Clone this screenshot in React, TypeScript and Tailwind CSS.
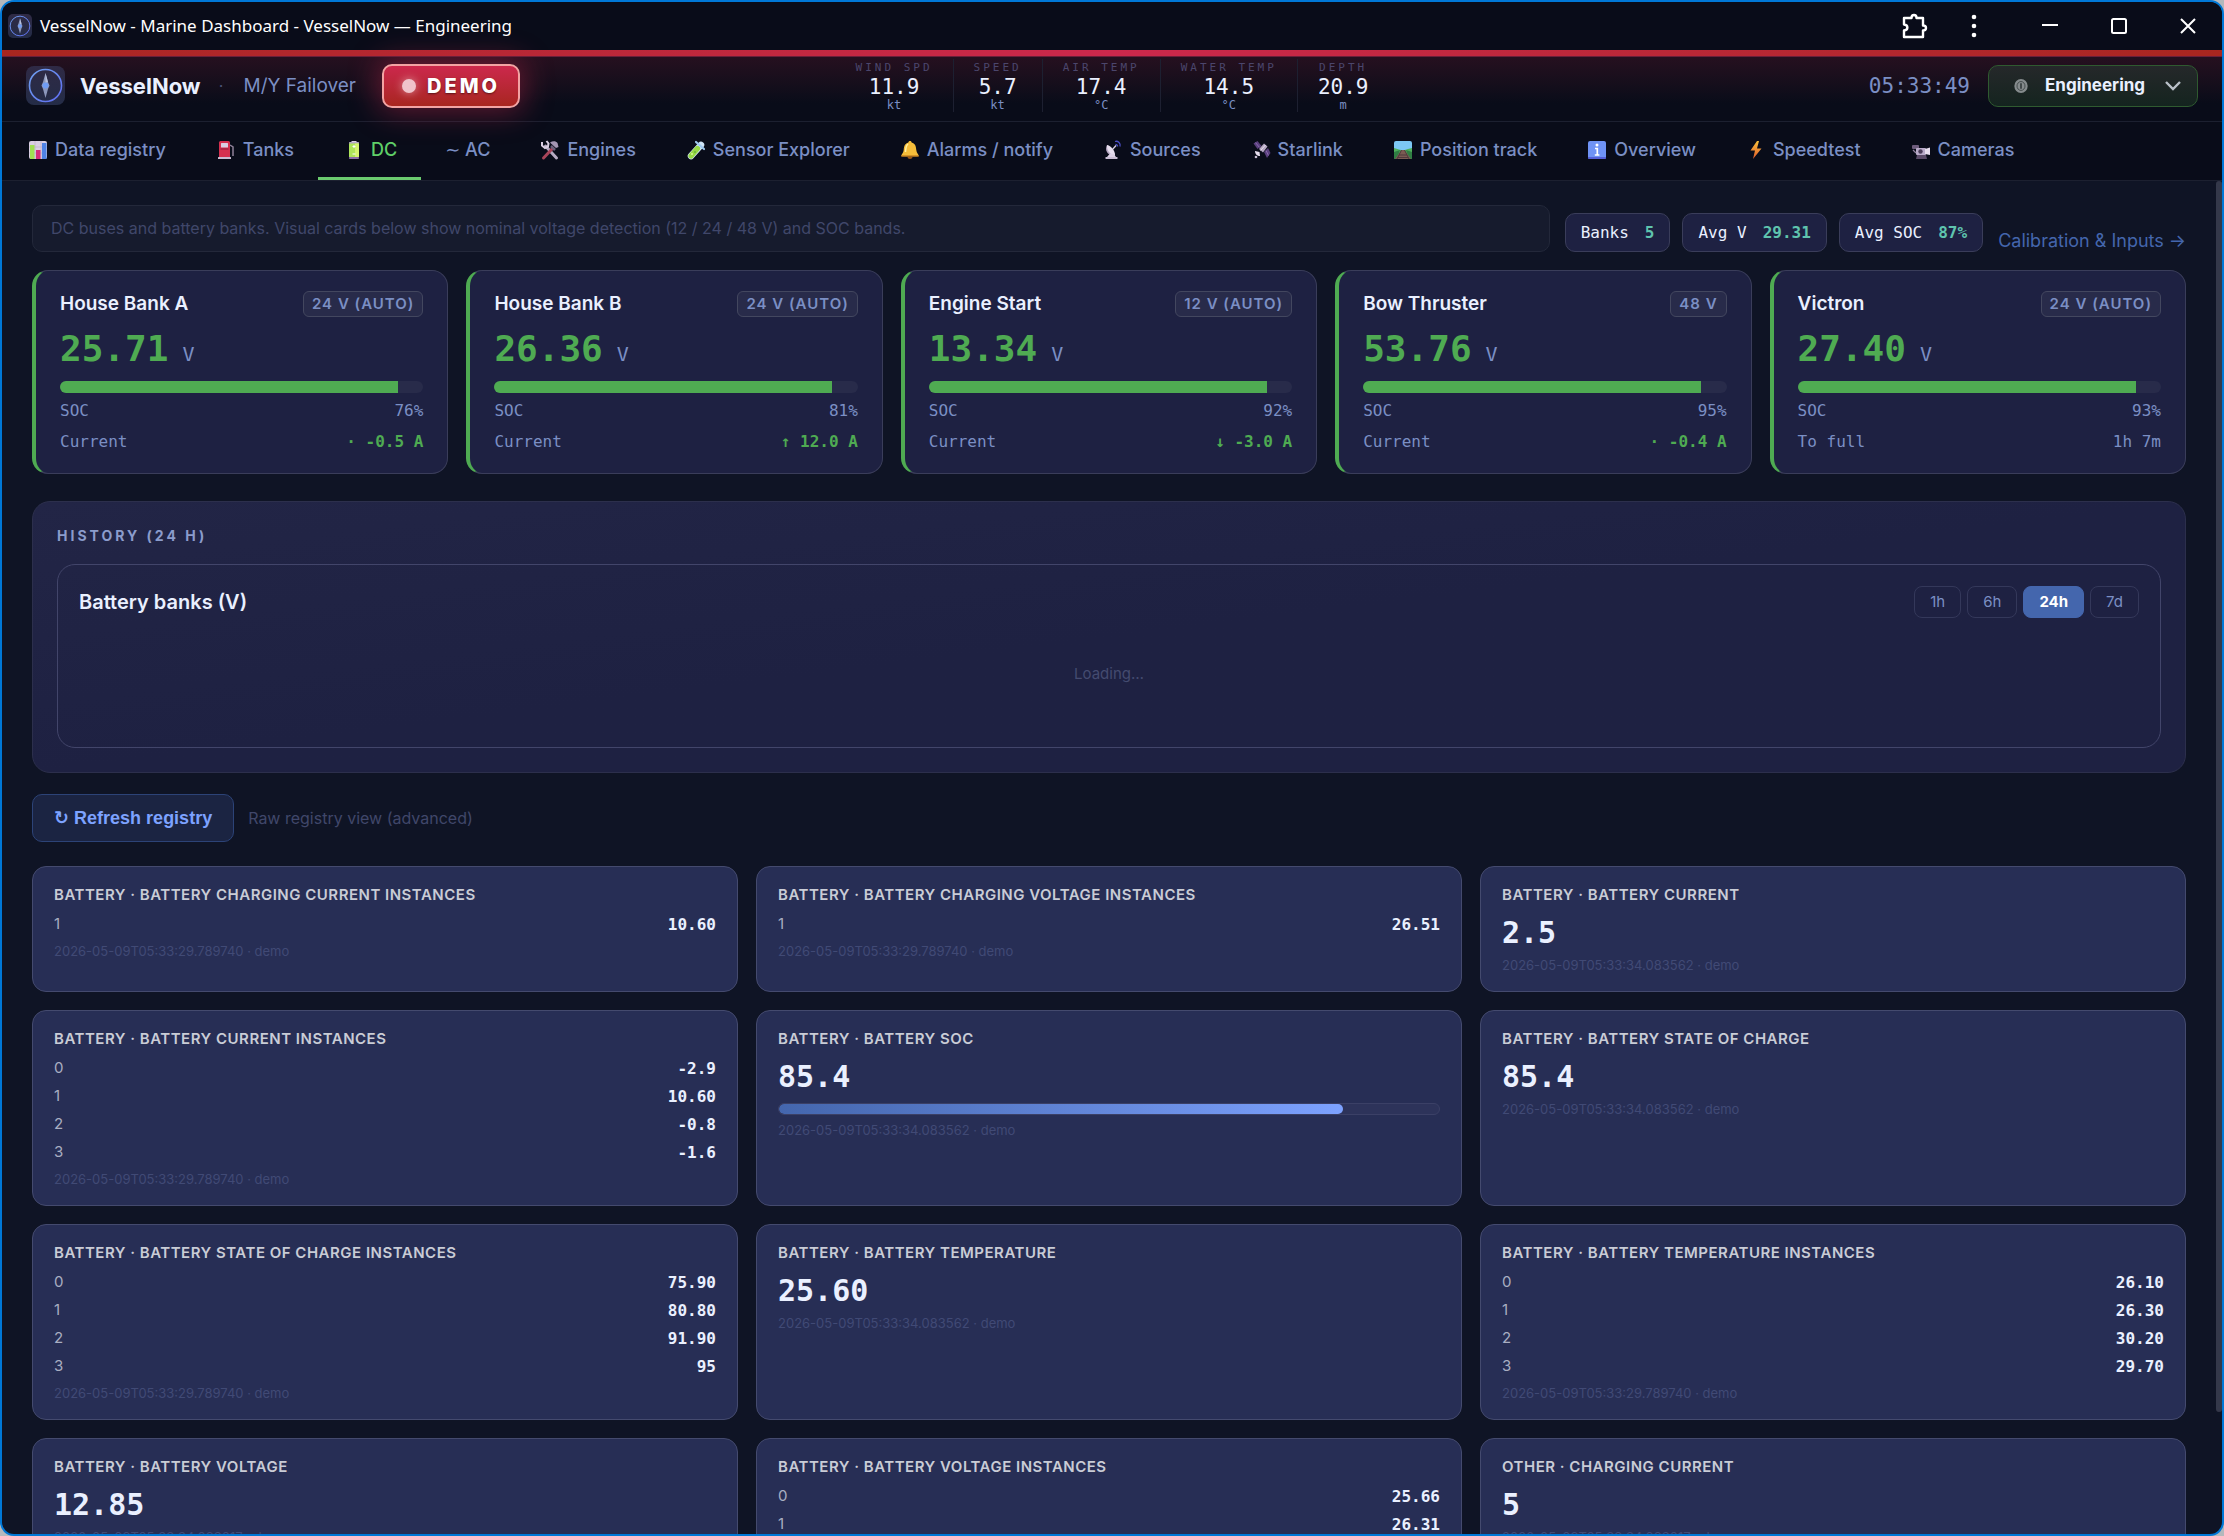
import React from "react";

const SANS = "font-['Inter','DejaVu_Sans',sans-serif]";
const MONO = "font-['DejaVu_Sans_Mono','Liberation_Mono',monospace]";

/* ---------- icons ---------- */

function Compass({ className, id }: { className: string; id: string }) {
  return (
    <svg viewBox="0 0 39 39" className={className} aria-hidden="true">
      <defs>
        <linearGradient id={id + "-bg"} x1="0" y1="0" x2="0" y2="1">
          <stop offset="0" stopColor="#2f2a45" />
          <stop offset="1" stopColor="#242c47" />
        </linearGradient>
        <linearGradient id={id + "-ring"} x1="0" y1="0" x2="1" y2="1">
          <stop offset="0" stopColor="#6fa0ee" />
          <stop offset="1" stopColor="#5f6cf0" />
        </linearGradient>
      </defs>
      <rect width="39" height="39" rx="8" fill={`url(#${id}-bg)`} />
      <circle cx="19.500" cy="19.500" r="16" fill="none" stroke={`url(#${id}-ring)`} strokeWidth="1.600" />
      <path d="M19.500 7 L22 16 L23.500 19.500 L22 23 L19.500 32 L17 23 L15.500 19.500 L17 16 Z" fill="#8c97bb" />
      <path d="M19.500 7 L22 16 L19.500 17 Z" fill="#b9c1dc" />
      <circle cx="19.500" cy="19.500" r="3" fill="#6f9cf5" />
    </svg>
  );
}

function Emoji({ children }: { children: React.ReactNode }) {
  return (
    <svg viewBox="0 0 24 24" className="size-6 shrink-0" aria-hidden="true">
      {children}
    </svg>
  );
}

const icons = {
  chart: (
    <Emoji>
      <rect x="3" y="3" width="18" height="18" rx="2" fill="#d9cfe3" />
      <path d="M3 9h18M3 15h18M9 3v18M15 3v18" stroke="#b9abc9" strokeWidth="0.600" />
      <rect x="4" y="7" width="4.500" height="14" fill="#9fe052" />
      <rect x="10" y="12" width="4.500" height="9" fill="#d52c7b" />
      <rect x="16" y="5" width="4.500" height="16" fill="#4f83e6" />
    </Emoji>
  ),
  fuel: (
    <Emoji>
      <path d="M16 7l3 2v9" fill="none" stroke="#8f8199" strokeWidth="1.500" />
      <rect x="5" y="3" width="11" height="17" rx="1.500" fill="#d5304f" />
      <rect x="7" y="5" width="7" height="4.500" rx="0.500" fill="#d9cfe3" />
      <path d="M6.500 11h8" stroke="#8f1d3d" strokeWidth="1" />
      <rect x="4" y="19" width="13" height="2" rx="0.500" fill="#c9bdd3" />
    </Emoji>
  ),
  battery: (
    <Emoji>
      <rect x="9.500" y="3" width="5" height="2" fill="#d9cfe3" />
      <rect x="7" y="4" width="10" height="2" rx="0.800" fill="#b7a9c4" />
      <rect x="7" y="5.500" width="10" height="13.500" fill="#aee55a" />
      <rect x="13" y="5.500" width="4" height="13.500" fill="#d5f56f" />
      <rect x="7" y="19" width="10" height="2" rx="0.800" fill="#8d6fa8" />
      <path d="M12 7v3M10.500 8.500h3M10.500 16h3" stroke="#fff" strokeWidth="1.100" />
    </Emoji>
  ),
  tools: (
    <Emoji>
      <path d="M7.500 8L18.500 20" stroke="#b6aac2" strokeWidth="3" strokeLinecap="round" />
      <path d="M4 4v3.500L7 10l3-1.500.5-3L8.500 3" fill="none" stroke="#d9cfe3" strokeWidth="2" />
      <path d="M14.500 10.500L5.500 20" stroke="#a8455a" strokeWidth="3" strokeLinecap="round" />
      <path d="M12 4.500c3-2 6-1.500 7.500.5l1 4-2.500 1-5-4.500z" fill="#a596b3" />
      <path d="M13 8l4 4" stroke="#6d607b" strokeWidth="2.500" />
    </Emoji>
  ),
  tube: (
    <Emoji>
      <path d="M17 7L7 18" stroke="#cfe4f6" strokeWidth="6.500" strokeLinecap="round" />
      <path d="M13.500 10.500L7 18" stroke="#96d944" strokeWidth="5.200" strokeLinecap="round" />
      <path d="M12 4l8 7" stroke="#9fc9f0" strokeWidth="2.200" strokeLinecap="round" />
      <circle cx="8" cy="16" r="1" fill="#d8f59a" />
      <circle cx="11" cy="14" r="0.800" fill="#4c9130" />
    </Emoji>
  ),
  bell: (
    <Emoji>
      <path d="M12 3c1 0 1.600.7 1.600 1.600C17 5.500 18 8 18.300 12c.2 3 2.400 4 2.400 6H3.300c0-2 2.200-3 2.400-6C6 8 7 5.500 10.400 4.600 10.400 3.700 11 3 12 3z" fill="#f5bd3a" />
      <path d="M10 6c-2 1.500-2.300 4-2.500 8" stroke="#fff0a0" strokeWidth="1.500" fill="none" />
      <path d="M3.300 18h17.400" stroke="#c98420" strokeWidth="1.400" />
      <path d="M9.500 18.800h5c0 3-5 3-5 0z" fill="#9c5a18" />
    </Emoji>
  ),
  antenna: (
    <Emoji>
      <path d="M14 3.500c3-1 6 2 5 5M14.500 6.500c1-.2 2.300 1 2 2" fill="none" stroke="#4b4fc4" strokeWidth="1.300" />
      <path d="M11 12l4-4.500" stroke="#d9cfe3" strokeWidth="1.300" />
      <path d="M6 7c-2.500 5 0 11 8 10.500z" fill="#b7a9c4" />
      <path d="M6 7c3 0 8.500 5.500 8 10.500C9 17 5.500 12 6 7z" fill="#e7deee" />
      <path d="M9 15.500L6 19h9l-2-3z" fill="#ddd2e6" />
      <rect x="4.500" y="19" width="12" height="2" rx="0.500" fill="#c9bdd3" />
    </Emoji>
  ),
  satellite: (
    <Emoji>
      <path d="M4.500 5.500l4-2.500 4 5-4 3z" fill="#5a3f7d" />
      <path d="M15 14l4-4 2.500 5-3.500 5z" fill="#5a3f7d" />
      <path d="M6.500 4.500l4 5M17 12.500l2.500 5" stroke="#9b7cc0" strokeWidth="0.700" />
      <path d="M10 11l5-5.500 3.500 3-4.500 6z" fill="#b7a9c4" />
      <path d="M11.500 12.500l5-5.500" stroke="#e7deee" strokeWidth="1" />
      <path d="M6 13c0 3 2 5 5 5l-.5-4z" fill="#e7deee" />
      <circle cx="7" cy="19" r="1.300" fill="#c9bdd3" />
    </Emoji>
  ),
  track: (
    <Emoji>
      <rect x="3" y="3" width="18" height="18" rx="2" fill="#7cc8f5" />
      <path d="M3 10l5 1.500 4 1 5-1.500 4-1V21H3z" fill="#4fb05c" />
      <path d="M3 14l6-2-3 9H3zM21 14l-6-2 3 9h3z" fill="#2f7f43" />
      <path d="M10.500 12h3L20 21H4z" fill="#7b5b52" />
      <path d="M10.500 12L6 21M13.500 12L18 21M8 17h8M6.500 19.500h11" stroke="#4f3a3d" strokeWidth="1" />
    </Emoji>
  ),
  info: (
    <Emoji>
      <rect x="3" y="3" width="18" height="18" rx="2" fill="#6f93f5" />
      <path d="M3 19h18v1a1 1 0 01-1 1H4a1 1 0 01-1-1z" fill="#5560d8" />
      <circle cx="12" cy="7" r="1.500" fill="#fff" />
      <path d="M10 10.500h2.300V17M9.800 17h4.600" stroke="#fff" strokeWidth="1.700" fill="none" />
    </Emoji>
  ),
  bolt: (
    <Emoji>
      <defs>
        <linearGradient id="bolt-fill" x1="0" y1="0" x2="0" y2="1">
          <stop offset="0" stopColor="#f7c13b" />
          <stop offset="1" stopColor="#e25a2c" />
        </linearGradient>
      </defs>
      <path d="M13 3L6.500 12.500H11L9 21l8.500-10.500H13L15 3z" fill="url(#bolt-fill)" />
    </Emoji>
  ),
  camera: (
    <Emoji>
      <rect x="3" y="7" width="7" height="4" rx="1" fill="#6d5c7c" />
      <rect x="7" y="10" width="10" height="7" rx="1" fill="#b9abc9" />
      <path d="M16 11l5-1.500V17l-5-1z" fill="#e7deee" />
      <circle cx="11.500" cy="13.500" r="2.200" fill="#4a3c58" />
      <path d="M8 17h9l1 4H7z" fill="#5b4c69" />
      <path d="M4 12l3 3" stroke="#8d7f9b" strokeWidth="1.200" />
    </Emoji>
  ),
};

/* ---------- data ---------- */

const readings = [
  { label: "WIND SPD", value: "11.9", unit: "kt" },
  { label: "SPEED", value: "5.7", unit: "kt" },
  { label: "AIR TEMP", value: "17.4", unit: "°C" },
  { label: "WATER TEMP", value: "14.5", unit: "°C" },
  { label: "DEPTH", value: "20.9", unit: "m" },
];

const tabs: { icon: React.ReactNode; label: string; active?: boolean }[] = [
  { icon: icons.chart, label: "Data registry" },
  { icon: icons.fuel, label: "Tanks" },
  { icon: icons.battery, label: "DC", active: true },
  { icon: null, label: "∼ AC" },
  { icon: icons.tools, label: "Engines" },
  { icon: icons.tube, label: "Sensor Explorer" },
  { icon: icons.bell, label: "Alarms / notify" },
  { icon: icons.antenna, label: "Sources" },
  { icon: icons.satellite, label: "Starlink" },
  { icon: icons.track, label: "Position track" },
  { icon: icons.info, label: "Overview" },
  { icon: icons.bolt, label: "Speedtest" },
  { icon: icons.camera, label: "Cameras" },
];

const chips = [
  { label: "Banks", value: "5" },
  { label: "Avg V", value: "29.31" },
  { label: "Avg SOC", value: "87%" },
];

const banks = [
  { name: "House Bank A", badge: "24 V (AUTO)", volts: "25.71", soc: "76%", key: "Current", val: "· -0.5 A" },
  { name: "House Bank B", badge: "24 V (AUTO)", volts: "26.36", soc: "81%", key: "Current", val: "↑ 12.0 A" },
  { name: "Engine Start", badge: "12 V (AUTO)", volts: "13.34", soc: "92%", key: "Current", val: "↓ -3.0 A" },
  { name: "Bow Thruster", badge: "48 V", volts: "53.76", soc: "95%", key: "Current", val: "· -0.4 A" },
  { name: "Victron", badge: "24 V (AUTO)", volts: "27.40", soc: "93%", key: "To full", val: "1h 7m" },
];

const T29 = "2026-05-09T05:33:29.789740 · demo";
const T34 = "2026-05-09T05:33:34.083562 · demo";
const T34B = "2026-05-09T05:33:34.083017 · demo";

type Entry = { title: string; rows?: string[][]; value?: string; bar?: number; time: string };

const registry: Entry[] = [
  { title: "BATTERY · BATTERY CHARGING CURRENT INSTANCES", rows: [["1", "10.60"]], time: T29 },
  { title: "BATTERY · BATTERY CHARGING VOLTAGE INSTANCES", rows: [["1", "26.51"]], time: T29 },
  { title: "BATTERY · BATTERY CURRENT", value: "2.5", time: T34 },
  {
    title: "BATTERY · BATTERY CURRENT INSTANCES",
    rows: [["0", "-2.9"], ["1", "10.60"], ["2", "-0.8"], ["3", "-1.6"]],
    time: T29,
  },
  { title: "BATTERY · BATTERY SOC", value: "85.4", bar: 85.4, time: T34 },
  { title: "BATTERY · BATTERY STATE OF CHARGE", value: "85.4", time: T34 },
  {
    title: "BATTERY · BATTERY STATE OF CHARGE INSTANCES",
    rows: [["0", "75.90"], ["1", "80.80"], ["2", "91.90"], ["3", "95"]],
    time: T29,
  },
  { title: "BATTERY · BATTERY TEMPERATURE", value: "25.60", time: T34 },
  {
    title: "BATTERY · BATTERY TEMPERATURE INSTANCES",
    rows: [["0", "26.10"], ["1", "26.30"], ["2", "30.20"], ["3", "29.70"]],
    time: T29,
  },
  { title: "BATTERY · BATTERY VOLTAGE", value: "12.85", time: T34B },
  { title: "BATTERY · BATTERY VOLTAGE INSTANCES", rows: [["0", "25.66"], ["1", "26.31"]], time: T29 },
  { title: "OTHER · CHARGING CURRENT", value: "5", time: T34B },
];

/* ---------- parts ---------- */

function TitleBar() {
  return (
    <div className="flex h-12 shrink-0 items-center bg-[#090c19] pl-1.5 pr-4 text-white">
      <Compass id="tb" className="size-6" />
      <span className="ml-2 font-['Noto_Sans','Open_Sans',sans-serif] text-[17px] leading-6">
        VesselNow - Marine Dashboard - VesselNow — Engineering
      </span>
      <div className="ml-auto flex items-center gap-6">
        <button aria-label="Extensions" className="flex size-9 items-center justify-center">
          <svg viewBox="0 0 28 28" className="size-7" fill="none" stroke="#fff" strokeWidth="2.400" strokeLinejoin="round">
            <path d="M4 6h7.500c0-4 5-4 5 0H23v7.500c4 0 4 5 0 5V25H4v-6.500c4.500-.5 4.500-5.500 0-6z" />
          </svg>
        </button>
        <button aria-label="Menu" className="flex size-9 items-center justify-center">
          <svg viewBox="0 0 28 28" className="size-7" fill="#fff">
            <circle cx="14" cy="5" r="2.300" />
            <circle cx="14" cy="14" r="2.300" />
            <circle cx="14" cy="23" r="2.300" />
          </svg>
        </button>
      </div>
      <div className="ml-10 flex items-center gap-[33px]">
        <button aria-label="Minimize" className="flex size-9 items-center justify-center">
          <svg viewBox="0 0 16 16" className="size-4"><path d="M0 7h16" stroke="#fff" strokeWidth="2" /></svg>
        </button>
        <button aria-label="Maximize" className="flex size-9 items-center justify-center">
          <svg viewBox="0 0 16 16" className="size-4"><rect x="1" y="1" width="14" height="14" rx="1.500" fill="none" stroke="#fff" strokeWidth="2" /></svg>
        </button>
        <button aria-label="Close" className="flex size-9 items-center justify-center">
          <svg viewBox="0 0 16 16" className="size-4"><path d="M1 1l14 14M15 1L1 15" stroke="#fff" strokeWidth="2" /></svg>
        </button>
      </div>
    </div>
  );
}

function Header() {
  return (
    <header className="relative z-10 grid h-[72px] shrink-0 grid-cols-[1fr_auto_1fr] items-center border-b border-[#1c2030] bg-[#090c19] bg-linear-to-b from-[#2a1020] to-[#090c19] to-75% px-6">
      <div className="absolute inset-x-0 top-0 h-[7px] border-b border-[#6b1f3a] bg-linear-to-r from-[#a8261f] via-[#cc284c] to-[#a8261f]" />
      <div className="flex items-center">
        <Compass id="hd" className="size-[39px]" />
        <h1 className="ml-[15px] text-[22px] font-bold leading-7 text-[#eaf0ff]">VesselNow</h1>
        <span className="ml-[18px] w-[5px] text-center text-[#4b5478]">·</span>
        <span className="ml-[20px] text-[19px] leading-7 text-[#7b8fc4]">M/Y Failover</span>
        <button className="ml-[26px] flex h-11 items-center rounded-[10px] border-2 border-[#f2a3a3] bg-linear-to-b from-[#cc284c] to-[#a8261f] pl-[18px] pr-[18px] shadow-[0_0_30px_4px_rgba(204,40,76,0.45)]">
          <span className="size-3.5 rounded-full bg-[#f0c4cb] shadow-[0_0_10px_rgba(255,255,255,0.5)]" />
          <span className="ml-[11px] text-[20px] font-extrabold leading-7 tracking-[3px] text-white [text-shadow:0_1px_2px_rgba(0,0,0,0.5)]">DEMO</span>
        </button>
      </div>
      <div className={`flex ${MONO}`}>
        {readings.map((r, i) => (
          <div key={r.label} className={`flex h-[53px] flex-col items-center justify-center px-5 pt-0.5 ${i ? "border-l border-[#1d2031]" : ""}`}>
            <span className="text-[11px] leading-4 tracking-[3px] text-[#4b466c]">{r.label}</span>
            <span className="text-[21px] leading-[22px] text-[#eaf0ff]">{r.value}</span>
            <span className="text-[12px] leading-[15px] text-[#7b8fc4]">{r.unit}</span>
          </div>
        ))}
      </div>
      <div className="flex items-center justify-end gap-[18px]">
        <time className={`${MONO} text-[21px] leading-7 text-[#7b8fc4]`}>05:33:49</time>
        <label className="flex h-[42px] items-center rounded-[10px] border border-[#2f5a30] bg-linear-to-b from-[#25282a] to-[#14241f] pl-6 pr-4">
          <svg viewBox="0 0 16 18" className="h-4 w-4" aria-hidden="true">
            <ellipse cx="8" cy="9" rx="7.500" ry="8" fill="#858b8d" />
            <ellipse cx="8" cy="9" rx="4.500" ry="5" fill="none" stroke="#3c4444" strokeWidth="1" />
            <path d="M8 6v6" stroke="#20292a" strokeWidth="1.500" />
          </svg>
          <select aria-label="View mode" className="ml-4 w-[104px] appearance-none bg-transparent text-[17px] font-bold text-[#eaf0ff]">
            <option>Engineering</option>
          </select>
          <svg viewBox="0 0 16 10" className="ml-4 h-2.5 w-4" aria-hidden="true">
            <path d="M1 1l7 7 7-7" fill="none" stroke="#b9c0c8" strokeWidth="2.400" />
          </svg>
        </label>
      </div>
    </header>
  );
}

function Nav() {
  return (
    <nav className="flex h-[59px] shrink-0 border-b border-[#1c2030] bg-[#090c19]">
      {tabs.map((t) => (
        <a
          key={t.label}
          href="#"
          aria-current={t.active ? "page" : undefined}
          className={`flex items-center gap-[5px] whitespace-nowrap border-b-[3px] px-6 text-[18px] font-medium ${
            t.active ? "border-[#6bcb6f] text-[#5fd068]" : "border-transparent text-[#7b8fc4]"
          }`}
        >
          {t.icon}
          {t.label}
        </a>
      ))}
    </nav>
  );
}

function BankCard({ bank }: { bank: (typeof banks)[number] }) {
  return (
    <article className="h-[204px] rounded-2xl border border-l-4 border-[#3a3d5a] border-l-[#4fab52] bg-[#1e2142] px-6 pt-5">
      <div className="flex items-center justify-between">
        <h2 className="text-[19px] font-semibold leading-[26px] text-[#eaf0ff]">{bank.name}</h2>
        <span className="rounded-md border border-[#43475f] bg-[#282b4a] px-2 text-[15px] font-semibold leading-6 tracking-[1px] text-[#7b8fc4]">
          {bank.badge}
        </span>
      </div>
      <p className={`mt-3 flex items-baseline ${MONO} font-bold leading-10`}>
        <span className="text-[36px] text-[#4fab52]">{bank.volts}</span>
        <span className="ml-3.5 text-[20px] font-normal text-[#7b8fc4]">V</span>
      </p>
      <div className="mt-[7px] h-3 overflow-hidden rounded-full bg-[#282b4a]">
        <div className="h-full w-[93%] bg-[#4fab52]" />
      </div>
      <dl className={`mt-1.5 ${MONO} text-[16px] leading-[23px] text-[#7b8fc4]`}>
        <div className="flex justify-between">
          <dt>SOC</dt>
          <dd>{bank.soc}</dd>
        </div>
        <div className="mt-2 flex justify-between">
          <dt>{bank.key}</dt>
          <dd className={bank.key === "Current" ? "font-bold text-[#4fab52]" : ""}>{bank.val}</dd>
        </div>
      </dl>
    </article>
  );
}

function RegistryCard({ entry }: { entry: Entry }) {
  return (
    <article className="rounded-[14px] border border-[#444a6e] bg-[#272e55] px-[21px] pb-[17px] pt-[17px]">
      <h3 className="text-[15px] font-semibold leading-[22px] tracking-[0.5px] text-[#c9ccd6]">{entry.title}</h3>
      {entry.rows && (
        <dl className="mt-1">
          {entry.rows.map(([k, v]) => (
            <div key={k} className="flex h-7 items-center justify-between">
              <dt className="text-[15px] text-[#a9aec2]">{k}</dt>
              <dd className={`${MONO} pt-0.5 text-[16px] font-bold text-[#eaf0ff]`}>{v}</dd>
            </div>
          ))}
        </dl>
      )}
      {entry.value && <p className={`mt-2 ${MONO} text-[30px] font-bold leading-[38px] text-[#eaf0ff]`}>{entry.value}</p>}
      {entry.bar && (
        <div className="mb-1.5 mt-[7px] h-3 overflow-hidden rounded-full border border-[#3b4066] bg-[#2d335a]">
          <div className="h-full rounded-full bg-linear-to-r from-[#4466ad] to-[#7da2ff]" style={{ width: `${entry.bar}%` }} />
        </div>
      )}
      <p className="mt-1 text-[13px] leading-[18px] text-[#414a75]">{entry.time}</p>
    </article>
  );
}

export default function App() {
  return (
    <div className="bg-[#b4b8bc]">
      <div className={`flex h-screen flex-col overflow-hidden rounded-[14px] border-2 border-[#0078d7] bg-[#0f1425] ${SANS}`}>
        <TitleBar />
        <Header />
        <Nav />
        <div className="flex min-h-0 flex-1">
          <main className="min-w-0 flex-1 overflow-hidden px-[30px] pt-6">
            <div className="flex items-end gap-[15px]">
              <p className="flex-1 rounded-[10px] border border-[#23283a] bg-[#161b2d] px-[18px] text-[16px] leading-[45px] text-[#40476a]">
                DC buses and battery banks. Visual cards below show nominal voltage detection (12 / 24 / 48 V) and SOC bands.
              </p>
              <ul className={`flex gap-3 ${MONO} text-[16px] leading-[37px]`}>
                {chips.map((c) => (
                  <li key={c.label} className="flex gap-4 rounded-[10px] border border-[#3a3d5a] bg-[#1e2142] px-[15px] text-[#eaf0ff]">
                    {c.label}
                    <b className="text-[#5fc4ae]">{c.value}</b>
                  </li>
                ))}
              </ul>
              <a href="#" className="text-[18px] leading-[22px] text-[#4466ad]">
                Calibration &amp; Inputs →
              </a>
            </div>

            <section className="mt-[18px] grid grid-cols-5 gap-[18px]">
              {banks.map((b) => (
                <BankCard key={b.name} bank={b} />
              ))}
            </section>

            <section className="mt-[27px] rounded-[18px] border border-[#2c2f4c] bg-linear-to-br from-[#222546] to-[#1e2142] to-50% px-6 pb-6 pt-[23px]">
              <h2 className="text-[14px] font-bold leading-[22px] tracking-[3px] text-[#8b9ccc]">HISTORY (24 H)</h2>
              <div className="mt-[17px] h-[184px] rounded-[18px] border border-[#42456a] px-[21px] pt-[21px]">
                <div className="flex items-center justify-between">
                  <h3 className="text-[20px] font-semibold leading-8 text-[#eaf0ff]">Battery banks (V)</h3>
                  <div className="flex gap-1.5 text-[15px] leading-[30px]">
                    {["1h", "6h", "24h", "7d"].map((r) => (
                      <button
                        key={r}
                        className={`rounded-lg border px-[15px] ${
                          r === "24h" ? "border-[#4466ad] bg-[#4466ad] font-bold text-white" : "border-[#34385a] text-[#7b8fc4]"
                        }`}
                      >
                        {r}
                      </button>
                    ))}
                  </div>
                </div>
                <p className="mt-11 text-center text-[15px] leading-6 text-[#444b70]">Loading…</p>
              </div>
            </section>

            <div className="mt-[21px] flex items-center gap-[14px]">
              <button className="h-12 rounded-[10px] border border-[#2c4377] bg-[#1b2442] px-[21px] font-['Liberation_Sans','DejaVu_Sans',sans-serif] text-[18px] font-bold text-[#7da2ff]">
                ↻ Refresh registry
              </button>
              <span className="text-[16px] text-[#40476a]">Raw registry view (advanced)</span>
            </div>

            <section className="mt-6 grid grid-cols-3 gap-[18px]">
              {registry.map((e) => (
                <RegistryCard key={e.title} entry={e} />
              ))}
            </section>
          </main>
          <div className="w-1.5 shrink-0">
            <div className="h-[91%] rounded-full bg-[#34384a]" />
          </div>
        </div>
      </div>
    </div>
  );
}
